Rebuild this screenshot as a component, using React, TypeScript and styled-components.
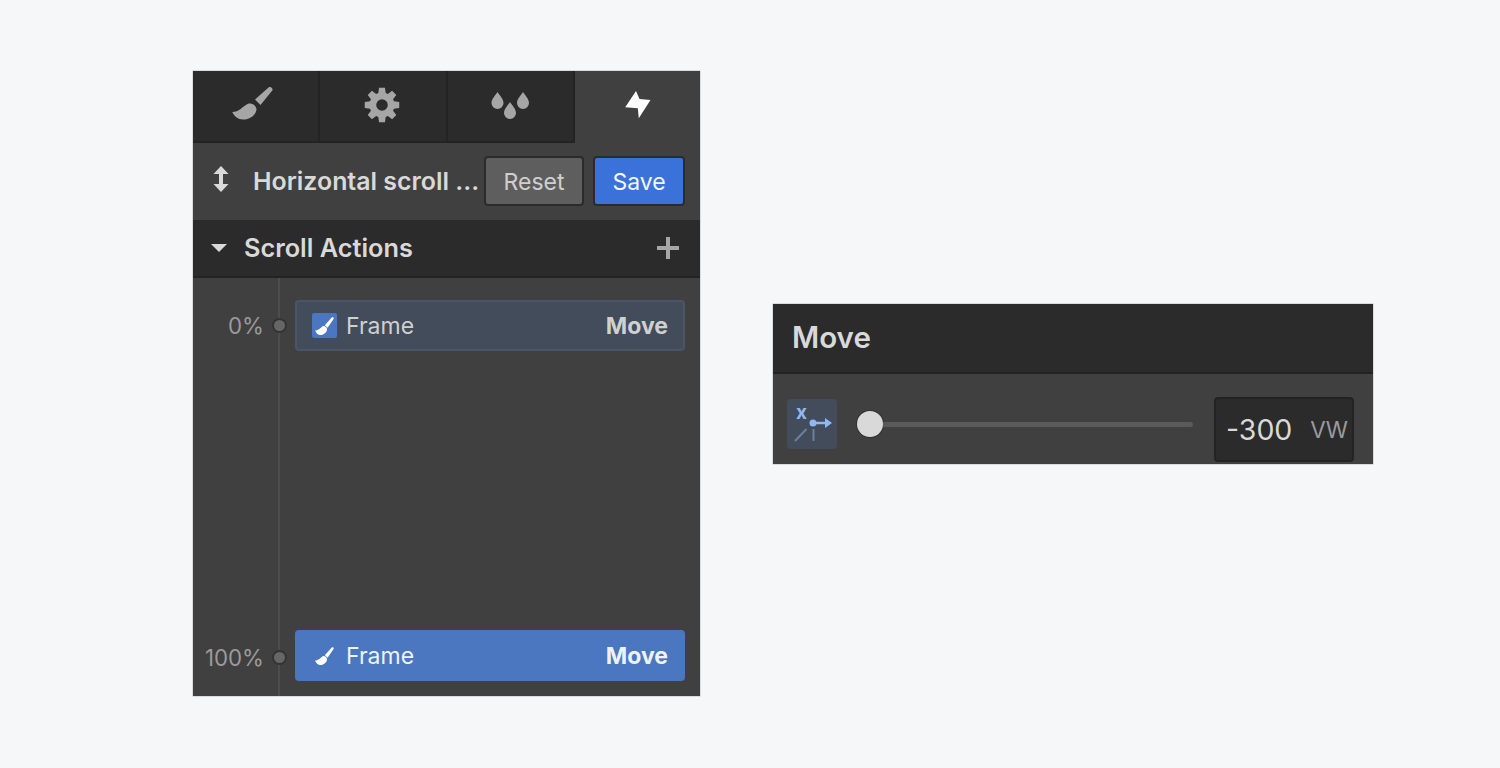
import styled, { createGlobalStyle } from "styled-components";

const GlobalStyle = createGlobalStyle`
  html, body {
    margin: 0;
    height: 100%;
    background: #f6f7f9;
    font-family: Inter, "Liberation Sans", sans-serif;
  }
`;

const Page = styled.div`
  display: flex;
  align-items: flex-start;
  gap: 73px;
  padding: 71px 0 0 193px;
  height: 768px;
  box-sizing: border-box;
`;

const Panel = styled.div`
  width: 507px;
  height: 625px;
  display: flex;
  flex-direction: column;
  background: #404040;
  color: #d9d9d9;
  box-shadow: 0 0 0 0.5px #c0c0c0;
`;

const Tabs = styled.div`
  display: grid;
  grid-template-columns: 127px 128px 127px 125px;
  height: 72px;
`;

const Tab = styled.div<{ $active?: boolean }>`
  display: flex;
  align-items: center;
  justify-content: center;
  box-sizing: border-box;
  background: ${(p) => (p.$active ? "#404040" : "#2b2b2b")};
  border-right: ${(p) => (p.$active ? "none" : "2px solid #232323")};
  border-bottom: 2px solid ${(p) => (p.$active ? "transparent" : "#232323")};
`;

const IconSvg = styled.svg<{ $shiftX?: number; $shiftY?: number }>`
  flex: none;
  margin-left: ${(p) => (p.$shiftX && p.$shiftX > 0 ? p.$shiftX : 0)}px;
  margin-right: ${(p) => (p.$shiftX && p.$shiftX < 0 ? -p.$shiftX : 0)}px;
  margin-bottom: ${(p) => p.$shiftY ?? 0}px;
`;

const TitleRow = styled.div`
  height: 77px;
  display: flex;
  align-items: center;
  padding: 0 15px 2px 19px;
  box-sizing: border-box;
`;

const Title = styled.div`
  flex: 1;
  margin-left: 24px;
  font-size: 24.900px;
  font-weight: 600;
  white-space: nowrap;
  color: #d9d9d9;
`;

const Button = styled.button<{ $primary?: boolean }>`
  height: 50px;
  width: ${(p) => (p.$primary ? "92px" : "100px")};
  margin-left: ${(p) => (p.$primary ? "9px" : "0")};
  border: 2px solid #2b2b2b;
  border-radius: 4px;
  padding: 2px 0 0;
  background: ${(p) => (p.$primary ? "#3b72d9" : "#5e5e5e")};
  color: ${(p) => (p.$primary ? "#f2f6fd" : "#cfcfcf")};
  font-family: inherit;
  font-size: 23px;
`;

const SectionBar = styled.div`
  height: 58px;
  display: flex;
  align-items: center;
  padding: 0 21px 1px 18px;
  box-sizing: border-box;
  background: #2b2b2b;
  border-bottom: 2px solid #232323;
`;

const SectionTitle = styled.div`
  flex: 1;
  margin-left: 17px;
  font-size: 25.300px;
  font-weight: 600;
`;

const Timeline = styled.div`
  position: relative;
  flex: 1;
  display: flex;
  flex-direction: column;
  justify-content: space-between;
  padding: 22px 15px 15px 0;

  &::before {
    content: "";
    position: absolute;
    left: 85px;
    top: 0;
    bottom: 0;
    width: 2px;
    background: #4d4d4d;
  }
`;

const ActionRow = styled.div`
  display: grid;
  grid-template-columns: 71px 31px 1fr;
  align-items: center;
  position: relative;
`;

const Percent = styled.div<{ $low?: boolean }>`
  text-align: right;
  font-size: 22.300px;
  color: #9a9a9a;
  padding-top: ${(p) => (p.$low ? "4px" : "0")};
`;

const Dot = styled.div<{ $low?: boolean }>`
  width: 11px;
  height: 11px;
  margin: ${(p) => (p.$low ? "4px" : "0")} 0 0 10px;
  border-radius: 50%;
  background: #666;
  box-shadow: 0 0 0 2px #333;
`;

const ActionCard = styled.div<{ $selected?: boolean }>`
  height: 51px;
  display: flex;
  align-items: center;
  padding: 0 15px;
  box-sizing: border-box;
  border-radius: 4px;
  background: ${(p) => (p.$selected ? "#4a77bf" : "#424c5a")};
  border: 2px solid ${(p) => (p.$selected ? "#4a77bf" : "#4a5567")};
  color: ${(p) => (p.$selected ? "#eef3fb" : "#d0d0d0")};
`;

const BrushBadge = styled.div<{ $filled?: boolean }>`
  width: 25px;
  height: 25px;
  display: flex;
  align-items: center;
  justify-content: center;
  border-radius: 2px;
  background: ${(p) => (p.$filled ? "#4a77bf" : "transparent")};
`;

const CardLabel = styled.div`
  flex: 1;
  margin-left: 9px;
  font-size: 23px;
`;

const CardAction = styled.div`
  font-size: 23px;
  font-weight: 700;
`;

const MovePanel = styled.div`
  width: 600px;
  margin-top: 233px;
  background: #404040;
  color: #d9d9d9;
  box-shadow: 0 0 0 0.5px #c0c0c0;
`;

const MoveHeader = styled.div`
  height: 70px;
  display: flex;
  align-items: center;
  padding: 0 0 3px 19px;
  box-sizing: border-box;
  background: #2b2b2b;
  border-bottom: 2px solid #232323;
  font-size: 29.500px;
  font-weight: 600;
`;

const MoveBody = styled.div`
  height: 90px;
  display: flex;
  align-items: center;
  padding: 10px 19px 0 14px;
  box-sizing: border-box;
`;

const AxisIcon = styled.div`
  width: 50px;
  height: 50px;
  border-radius: 4px;
  background: #424c5a;
  flex: none;
`;

const Slider = styled.div`
  flex: 1;
  height: 26px;
  margin: 0 21px 0 20px;
  display: flex;
  align-items: center;
`;

const Knob = styled.div`
  width: 26px;
  height: 26px;
  flex: none;
  border-radius: 50%;
  background: #d9d9d9;
  box-shadow: 0 0 0 1px #333;
`;

const Track = styled.div`
  flex: 1;
  height: 5px;
  border-radius: 0 3px 3px 0;
  background: #5a5a5a;
`;

const NumberBox = styled.div`
  width: 140px;
  height: 65px;
  margin-top: 10px;
  display: flex;
  align-items: center;
  justify-content: space-between;
  padding: 0 4px 0 10px;
  box-sizing: border-box;
  background: #2b2b2b;
  border: 2px solid #232323;
  border-radius: 4px;
`;

const NumberValue = styled.span`
  font-size: 28.500px;
  color: #d9d9d9;
`;

const NumberUnit = styled.span`
  font-size: 22.500px;
  color: #9a9a9a;
`;

function TabBrushIcon() {
  return (
    <IconSvg width="42" viewBox="0 0 42 34" fill="#a6a6a6" $shiftX={-5} $shiftY={7}>
      <path d="M23 13.500 36.500 1.500c1.800-1.400 5 1.200 3.800 3L28.500 19Z" />
      <path d="M.3 26C7 26 10 21 15.500 18c4-1.500 9 1.500 9 5.500-1 6-6.500 10-13.500 10-5 0-9-3.500-10.700-7.500Z" />
    </IconSvg>
  );
}

function SmallBrushIcon() {
  return (
    <IconSvg width="19" height="18" viewBox="0 0 19 18" fill="#fff">
      <path d="M9.800 8.300 16.500.8c1-.9 2.400-.5 2.200.9L12.600 10.800Z" />
      <path d="M0 13.500C3.500 13.500 5.500 11 8 9c2.500 0 4.500 2 4 4-1 3.500-4 5-6.500 5C3 18 1 16 0 13.500Z" />
    </IconSvg>
  );
}

function gearPath() {
  // eight teeth round the middle of the wheel
  const points: string[] = [];
  for (let i = 0; i < 8; i++) {
    const a = (i * Math.PI) / 4 - Math.PI / 2;
    const at = (r: number, d: number) =>
      `${(18 + r * Math.cos(a + d)).toFixed(2)} ${(18 + r * Math.sin(a + d)).toFixed(2)}`;
    points.push(at(12.5, -0.3), at(17.5, -0.17), at(17.5, 0.17), at(12.5, 0.3));
  }
  return `M${points.join("L")}Z`;
}

function GearIcon() {
  return (
    <IconSvg width="36" height="36" viewBox="0 0 36 36" fill="#a6a6a6" $shiftX={-3} $shiftY={2}>
      <path
        fillRule="evenodd"
        d={`${gearPath()}M18 12.200a5.800 5.800 0 1 0 0 11.600a5.800 5.800 0 1 0 0-11.600Z`}
      />
    </IconSvg>
  );
}

function DropsIcon() {
  const drop = (x: number, y: number) =>
    `M${x} ${y}c2 3.500 6 6.500 6 11a6 6 0 0 1-12 0c0-4.500 4-7.500 6-11Z`;
  return (
    <IconSvg width="38" height="30" viewBox="0 0 38 30" fill="#a6a6a6" $shiftX={-2}>
      <path d={drop(6.500, 1)} />
      <path d={drop(19, 11)} />
      <path d={drop(32, 1)} />
    </IconSvg>
  );
}

function BoltIcon() {
  return (
    <IconSvg width="26" height="30" viewBox="0 0 26 30" fill="#fff" $shiftY={2}>
      <path d="M11 1 14.500 9 25.500 10 13.800 28.300 12.800 18.300 .2 17.300Z" />
    </IconSvg>
  );
}

function UpDownIcon() {
  return (
    <IconSvg width="16" height="26" viewBox="0 0 16 26" fill="#d9d9d9" $shiftX={1} $shiftY={3}>
      <path d="M8 0 15.500 8H10v10h5.500L8 26 .5 18H6V8H.5Z" />
    </IconSvg>
  );
}

function CaretIcon() {
  return (
    <IconSvg width="16" height="8" viewBox="0 0 16 8" fill="#d9d9d9">
      <path d="M0 0h16L8 8Z" />
    </IconSvg>
  );
}

function PlusIcon() {
  return (
    <IconSvg width="22" height="22" viewBox="0 0 22 22" fill="#a6a6a6">
      <path d="M9 0h4v9h9v4h-9v9H9v-9H0V9h9Z" />
    </IconSvg>
  );
}

function AxisGlyph() {
  return (
    <svg width="50" height="50" viewBox="0 0 50 50">
      <text x="9" y="19.500" fontFamily="Inter, sans-serif" fontSize="19" fontWeight="700" fill="#8fb8f5">
        x
      </text>
      <path d="M8 42 19.500 30M26.500 30v12" stroke="#6c7f9c" strokeWidth="2" fill="none" />
      <circle cx="26" cy="24" r="3.500" fill="#8fb8f5" />
      <path d="M26 24h13" stroke="#8fb8f5" strokeWidth="2.500" />
      <path d="M38 19l7 5-7 5Z" fill="#8fb8f5" />
    </svg>
  );
}

export default function App() {
  return (
    <>
      <GlobalStyle />
      <Page>
        <Panel>
          <Tabs>
            <Tab>
              <TabBrushIcon />
            </Tab>
            <Tab>
              <GearIcon />
            </Tab>
            <Tab>
              <DropsIcon />
            </Tab>
            <Tab $active>
              <BoltIcon />
            </Tab>
          </Tabs>
          <TitleRow>
            <UpDownIcon />
            <Title>Horizontal scroll ...</Title>
            <Button>Reset</Button>
            <Button $primary>Save</Button>
          </TitleRow>
          <SectionBar>
            <CaretIcon />
            <SectionTitle>Scroll Actions</SectionTitle>
            <PlusIcon />
          </SectionBar>
          <Timeline>
            <ActionRow>
              <Percent>0%</Percent>
              <Dot />
              <ActionCard>
                <BrushBadge $filled>
                  <SmallBrushIcon />
                </BrushBadge>
                <CardLabel>Frame</CardLabel>
                <CardAction>Move</CardAction>
              </ActionCard>
            </ActionRow>
            <ActionRow>
              <Percent $low>100%</Percent>
              <Dot $low />
              <ActionCard $selected>
                <BrushBadge>
                  <SmallBrushIcon />
                </BrushBadge>
                <CardLabel>Frame</CardLabel>
                <CardAction>Move</CardAction>
              </ActionCard>
            </ActionRow>
          </Timeline>
        </Panel>
        <MovePanel>
          <MoveHeader>Move</MoveHeader>
          <MoveBody>
            <AxisIcon>
              <AxisGlyph />
            </AxisIcon>
            <Slider>
              <Knob />
              <Track />
            </Slider>
            <NumberBox>
              <NumberValue>-300</NumberValue>
              <NumberUnit>VW</NumberUnit>
            </NumberBox>
          </MoveBody>
        </MovePanel>
      </Page>
    </>
  );
}
